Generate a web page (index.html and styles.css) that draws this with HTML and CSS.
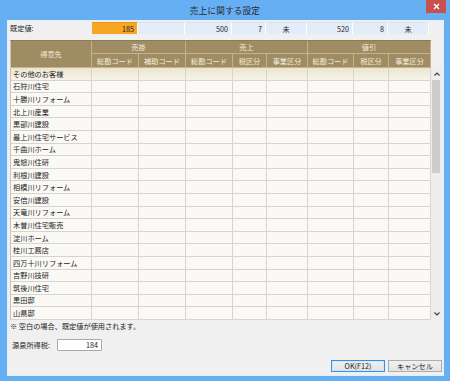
FILE: index.html
```html
<!DOCTYPE html>
<html lang="ja">
<head>
<meta charset="utf-8">
<title>売上に関する設定</title>
<link rel="stylesheet" href="styles.css">
</head>
<body>
<div class="window">
  <div class="titlebar">
    <span></span>
    <span class="title">売上に関する設定</span>
    <span class="close" aria-label="閉じる">
      <svg width="7" height="7" viewBox="0 0 7 7"><path d="M1 1 L6 6 M6 1 L1 6" stroke="#fff" stroke-width="1.4" fill="none"/></svg>
    </span>
  </div>
  <div class="client">
    <div class="defaults">
      <span class="defaults-label">既定値:</span>
      <div class="defaults-cells">
        <span class="dcell w46 num active">185</span>
        <span class="dcell w47"></span>
        <span class="dcell w47 num">500</span>
        <span class="dcell w34 num">7</span>
        <span class="dcell w41 ctr">未</span>
        <span class="dcell w46 num">520</span>
        <span class="dcell w35 num">8</span>
        <span class="dcell w41 ctr">未</span>
      </div>
    </div>
    <div class="grid-area">
      <table class="grid">
        <colgroup>
          <col class="c81"><col class="c47"><col class="c47"><col class="c47"><col class="c34"><col class="c41"><col class="c46"><col class="c35"><col class="c42">
        </colgroup>
        <thead>
          <tr class="h1">
            <th rowspan="2">得意先</th>
            <th colspan="2">売掛</th>
            <th colspan="3">売上</th>
            <th colspan="3">値引</th>
          </tr>
          <tr class="h2">
            <th>総勘コード</th><th>補助コード</th>
            <th>総勘コード</th><th>税区分</th><th>事業区分</th>
            <th>総勘コード</th><th>税区分</th><th>事業区分</th>
          </tr>
        </thead>
        <tbody>
          <tr class="current"><td>その他のお客様</td><td></td><td></td><td></td><td></td><td></td><td></td><td></td><td></td></tr>
          <tr><td>石狩川住宅</td><td></td><td></td><td></td><td></td><td></td><td></td><td></td><td></td></tr>
          <tr><td>十勝川リフォーム</td><td></td><td></td><td></td><td></td><td></td><td></td><td></td><td></td></tr>
          <tr><td>北上川産業</td><td></td><td></td><td></td><td></td><td></td><td></td><td></td><td></td></tr>
          <tr><td>黒部川建設</td><td></td><td></td><td></td><td></td><td></td><td></td><td></td><td></td></tr>
          <tr><td>最上川住宅サービス</td><td></td><td></td><td></td><td></td><td></td><td></td><td></td><td></td></tr>
          <tr><td>千曲川ホーム</td><td></td><td></td><td></td><td></td><td></td><td></td><td></td><td></td></tr>
          <tr><td>鬼怒川住研</td><td></td><td></td><td></td><td></td><td></td><td></td><td></td><td></td></tr>
          <tr><td>利根川建設</td><td></td><td></td><td></td><td></td><td></td><td></td><td></td><td></td></tr>
          <tr><td>相模川リフォーム</td><td></td><td></td><td></td><td></td><td></td><td></td><td></td><td></td></tr>
          <tr><td>安倍川建設</td><td></td><td></td><td></td><td></td><td></td><td></td><td></td><td></td></tr>
          <tr><td>天竜川リフォーム</td><td></td><td></td><td></td><td></td><td></td><td></td><td></td><td></td></tr>
          <tr><td>木曽川住宅販売</td><td></td><td></td><td></td><td></td><td></td><td></td><td></td><td></td></tr>
          <tr><td>淀川ホーム</td><td></td><td></td><td></td><td></td><td></td><td></td><td></td><td></td></tr>
          <tr><td>桂川工務店</td><td></td><td></td><td></td><td></td><td></td><td></td><td></td><td></td></tr>
          <tr><td>四万十川リフォーム</td><td></td><td></td><td></td><td></td><td></td><td></td><td></td><td></td></tr>
          <tr><td>吉野川技研</td><td></td><td></td><td></td><td></td><td></td><td></td><td></td><td></td></tr>
          <tr><td>筑後川住宅</td><td></td><td></td><td></td><td></td><td></td><td></td><td></td><td></td></tr>
          <tr><td>黒田邸</td><td></td><td></td><td></td><td></td><td></td><td></td><td></td><td></td></tr>
          <tr><td>山県邸</td><td></td><td></td><td></td><td></td><td></td><td></td><td></td><td></td></tr>
        </tbody>
      </table>
      <div class="scrollbar">
        <span class="sb-btn">
          <svg width="6" height="4" viewBox="0 0 6 4"><path d="M0.5 3.5 L3 1 L5.5 3.5" stroke="#404040" stroke-width="1.2" fill="none"/></svg>
        </span>
        <span class="sb-track"><span class="sb-thumb"></span></span>
        <span class="sb-btn">
          <svg width="6" height="4" viewBox="0 0 6 4"><path d="M0.5 0.5 L3 3 L5.5 0.5" stroke="#404040" stroke-width="1.2" fill="none"/></svg>
        </span>
      </div>
    </div>
    <p class="note">※ 空白の場合、既定値が使用されます。</p>
    <div class="tax-row">
      <span class="tax-label">源泉所得税:</span>
      <span class="tax-input">184</span>
    </div>
    <div class="buttons">
      <button class="btn default">OK(F12)</button>
      <button class="btn">キャンセル</button>
    </div>
  </div>
</div>
</body>
</html>
```
FILE: styles.css
```css
html, body {
  margin: 0;
  padding: 0;
}
body {
  width: 450px;
  height: 381px;
  overflow: hidden;
  background: #66aff3;
  font-family: "Noto Sans CJK JP", "Noto Sans", sans-serif;
  color: #1c1c1c;
}
.window {
  display: flex;
  flex-direction: column;
  height: 381px;
}
.titlebar {
  height: 20px;
  display: grid;
  grid-template-columns: 1fr auto 1fr;
  align-items: start;
}
.title {
  font-size: 8.6px;
  line-height: 20px;
  color: #2a2a2a;
  letter-spacing: 0.2px;
}
.close {
  justify-self: end;
  margin-right: 4px;
  width: 20px;
  height: 13px;
  background: #c9504d;
  display: flex;
  align-items: center;
  justify-content: center;
}
.client {
  flex: 1;
  margin: 0 6px 5px 7px;
  background: #f0f0f0;
  border: 1px solid #e6edf5;
  padding: 1px 1px 0 2px;
  display: flex;
  flex-direction: column;
  font-size: 7.2px;
}
.defaults {
  display: flex;
  height: 12px;
  align-items: center;
}
.defaults-label {
  width: 82px;
  line-height: 12px;
}
.defaults-cells {
  display: flex;
  height: 12px;
  background: #fff;
}
.dcell {
  box-sizing: border-box;
  height: 12px;
  line-height: 12px;
  background: #e3edf9;
  border-right: 1px solid #fff;
  border-top: 1px solid #d6e2ee;
}
.dcell.active {
  background: #f9a524;
  border-top-color: #e89618;
}
.num { text-align: right; padding-right: 3px; }
.ctr { text-align: center; }
.w46 { width: 46px; }
.w47 { width: 47px; }
.w34 { width: 34px; }
.w35 { width: 35px; }
.w41 { width: 41px; }

.grid-area {
  display: flex;
  margin-top: 6px;
}
.grid {
  width: 420px;
  table-layout: fixed;
  border-collapse: separate;
  border-spacing: 0;
  border-top: 1px solid #8f7c55;
  border-left: 1px solid #c8c4bb;
}
.c81 { width: 81px; }
.c47 { width: 47px; }
.c34 { width: 34px; }
.c41 { width: 41px; }
.c46 { width: 46px; }
.c35 { width: 35px; }
.c42 { width: 42px; }
.grid th {
  background: #a08c62;
  color: #f4eedf;
  font-weight: normal;
  padding: 0;
  text-align: center;
  box-sizing: border-box;
  border-right: 1px solid #c4b390;
  border-bottom: 1px solid #c4b390;
  line-height: 10px;
}
.grid tr.h1 th { height: 13px; }
.grid tr.h2 th { height: 14px; }
.grid th[rowspan] { height: 27px; }
.grid td {
  box-sizing: border-box;
  height: 12.6px;
  padding: 0 2px;
  line-height: 10px;
  background: #faf9f5;
  border-right: 1px solid #d7d4cc;
  border-bottom: 1px solid #d7d4cc;
  white-space: nowrap;
  overflow: hidden;
}
.grid tr.current td {
  background: linear-gradient(#ece4cf, #f7f3ea);
}
.scrollbar {
  width: 12px;
  margin-top: 28px;
  height: 252px;
  display: flex;
  flex-direction: column;
  background: #ededed;
}
.sb-btn {
  height: 12px;
  display: flex;
  align-items: center;
  justify-content: center;
}
.sb-track {
  flex: 1;
  display: flex;
  flex-direction: column;
  padding: 0 2px 0 1px;
}
.sb-thumb {
  height: 93px;
  background: #cdcdcd;
}
.note {
  margin: 1px 0 0;
  line-height: 10px;
}
.tax-row {
  display: flex;
  align-items: center;
  margin-top: 8px;
  height: 12px;
  padding-left: 2px;
}
.tax-label {
  width: 45px;
}
.tax-input {
  box-sizing: border-box;
  width: 45px;
  height: 12px;
  line-height: 10px;
  background: #fff;
  border: 1px solid #a9a9a9;
  border-radius: 1px;
  text-align: right;
  padding-right: 3px;
}
.buttons {
  display: flex;
  justify-content: flex-end;
  gap: 3px;
  margin-top: 9px;
}
.btn {
  box-sizing: border-box;
  width: 54px;
  height: 12px;
  margin: 0;
  padding: 0;
  font-family: inherit;
  font-size: 7.2px;
  line-height: 10px;
  color: #1c1c1c;
  background: linear-gradient(#f0f0f0, #e3e3e3);
  border: 1px solid #acacac;
  border-radius: 0;
}
.btn.default {
  border-color: #3c8fe0;
  box-shadow: inset 0 0 0 1px #cfe6fb;
}
```
